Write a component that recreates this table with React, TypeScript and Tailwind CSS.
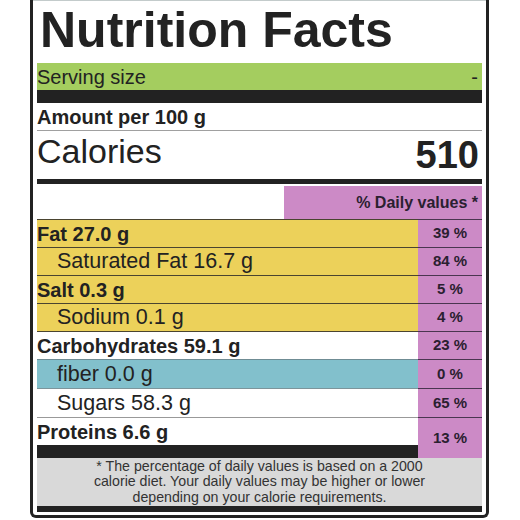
const rows = [
  { label: "Fat 27.0 g", pct: "39 %", bold: true, bg: "bg-[#ecd15a]", line: "border-[#4a4430]", h: "h-[28px]" },
  { label: "Saturated Fat 16.7 g", pct: "84 %", bold: false, bg: "bg-[#ecd15a]", line: "border-[#4a4430]", h: "h-[28px]" },
  { label: "Salt 0.3 g", pct: "5 %", bold: true, bg: "bg-[#ecd15a]", line: "border-[#4a4430]", h: "h-[28px]" },
  { label: "Sodium 0.1 g", pct: "4 %", bold: false, bg: "bg-[#ecd15a]", line: "border-[#4a4430]", h: "h-[28px]" },
  { label: "Carbohydrates 59.1 g", pct: "23 %", bold: true, bg: "bg-white", line: "border-[#4a4430]", h: "h-[28px]" },
  { label: "fiber 0.0 g", pct: "0 %", bold: false, bg: "bg-[#82c0cc]", line: "border-[#6f8c94]", h: "h-[29px]" },
  { label: "Sugars 58.3 g", pct: "65 %", bold: false, bg: "bg-white", line: "border-[#7d959b]", h: "h-[29px]" },
];

const App = () => {
  return (
    <div className="w-[520px] h-[520px] bg-white pl-[30px] text-[#222] font-['Liberation_Sans',Arial,sans-serif]">
      <div className="w-[459px] h-[518px] border-x-[3px] border-b-[3px] border-[#222] rounded-b-[6px] flex flex-col">
        <div className="h-px bg-[#c3cbcb]" />
        <div className="px-[4px] flex flex-col">
          {/* Title */}
          <div className="h-[62px] pt-[4px] pl-[3px] text-[50px] leading-[50px] font-bold">
            Nutrition Facts
          </div>

          {/* Serving size */}
          <div className="h-[27px] bg-[#a4cd5f] flex items-center justify-between pr-[4px] text-[20px]">
            <span>Serving size</span>
            <span>-</span>
          </div>
          <div className="h-[13px] bg-[#222]" />

          {/* Amount */}
          <div className="h-[28px] border-b border-[#a0a0a0] flex items-center text-[20px] font-bold">
            Amount per 100 g
          </div>

          {/* Calories */}
          <div className="h-[48px] flex justify-between items-start pr-[3px]">
            <span className="mt-[3px] text-[34px] leading-[34px]">Calories</span>
            <span className="mt-[5px] text-[38px] leading-[38px] font-bold">510</span>
          </div>
          <div className="h-[5px] bg-[#222]" />

          {/* Daily values header */}
          <div className="h-[35px] pt-[2px] flex justify-end">
            <div className="w-[198px] h-[33px] bg-[#cc8ac6] flex items-center justify-end pr-[4px] text-[16px] font-bold text-[#2a2030]">
              % Daily values *
            </div>
          </div>

          {/* Nutrient rows */}
          {rows.map((r) => (
            <div key={r.label} className={`flex ${r.h}`}>
              <div
                className={`w-[381px] border-t ${r.line} ${r.bg} flex items-center text-[#222] ${
                  r.bold ? "text-[20px] font-bold" : "pl-[20px] text-[21.5px]"
                }`}
              >
                {r.label}
              </div>
              <div className="w-[64px] border-t border-[#4a3550] bg-[#cc8ac6] flex items-center justify-center text-[15px] font-bold text-[#2a2030]">
                {r.pct}
              </div>
            </div>
          ))}

          {/* Proteins */}
          <div className="flex h-[41px]">
            <div className="w-[381px] flex flex-col">
              <div className="h-[28px] border-t border-[#999] flex items-center text-[20px] font-bold">
                Proteins 6.6 g
              </div>
              <div className="h-[13px] bg-[#222]" />
            </div>
            <div className="w-[64px] border-t border-[#4a3550] bg-[#cc8ac6] flex items-center justify-center text-[15px] font-bold text-[#2a2030]">
              13 %
            </div>
          </div>

          {/* Footer */}
          <div className="h-[48px] bg-[#d9d9d9] flex items-center justify-center text-center text-[14.2px] leading-[15.5px] text-[#333]">
            <p>
              * The percentage of daily values is based on a 2000
              <br />
              calorie diet. Your daily values may be higher or lower
              <br />
              depending on your calorie requirements.
            </p>
          </div>
          <div className="h-[6px] bg-[#222]" />
        </div>
      </div>
    </div>
  );
};

export default App;
